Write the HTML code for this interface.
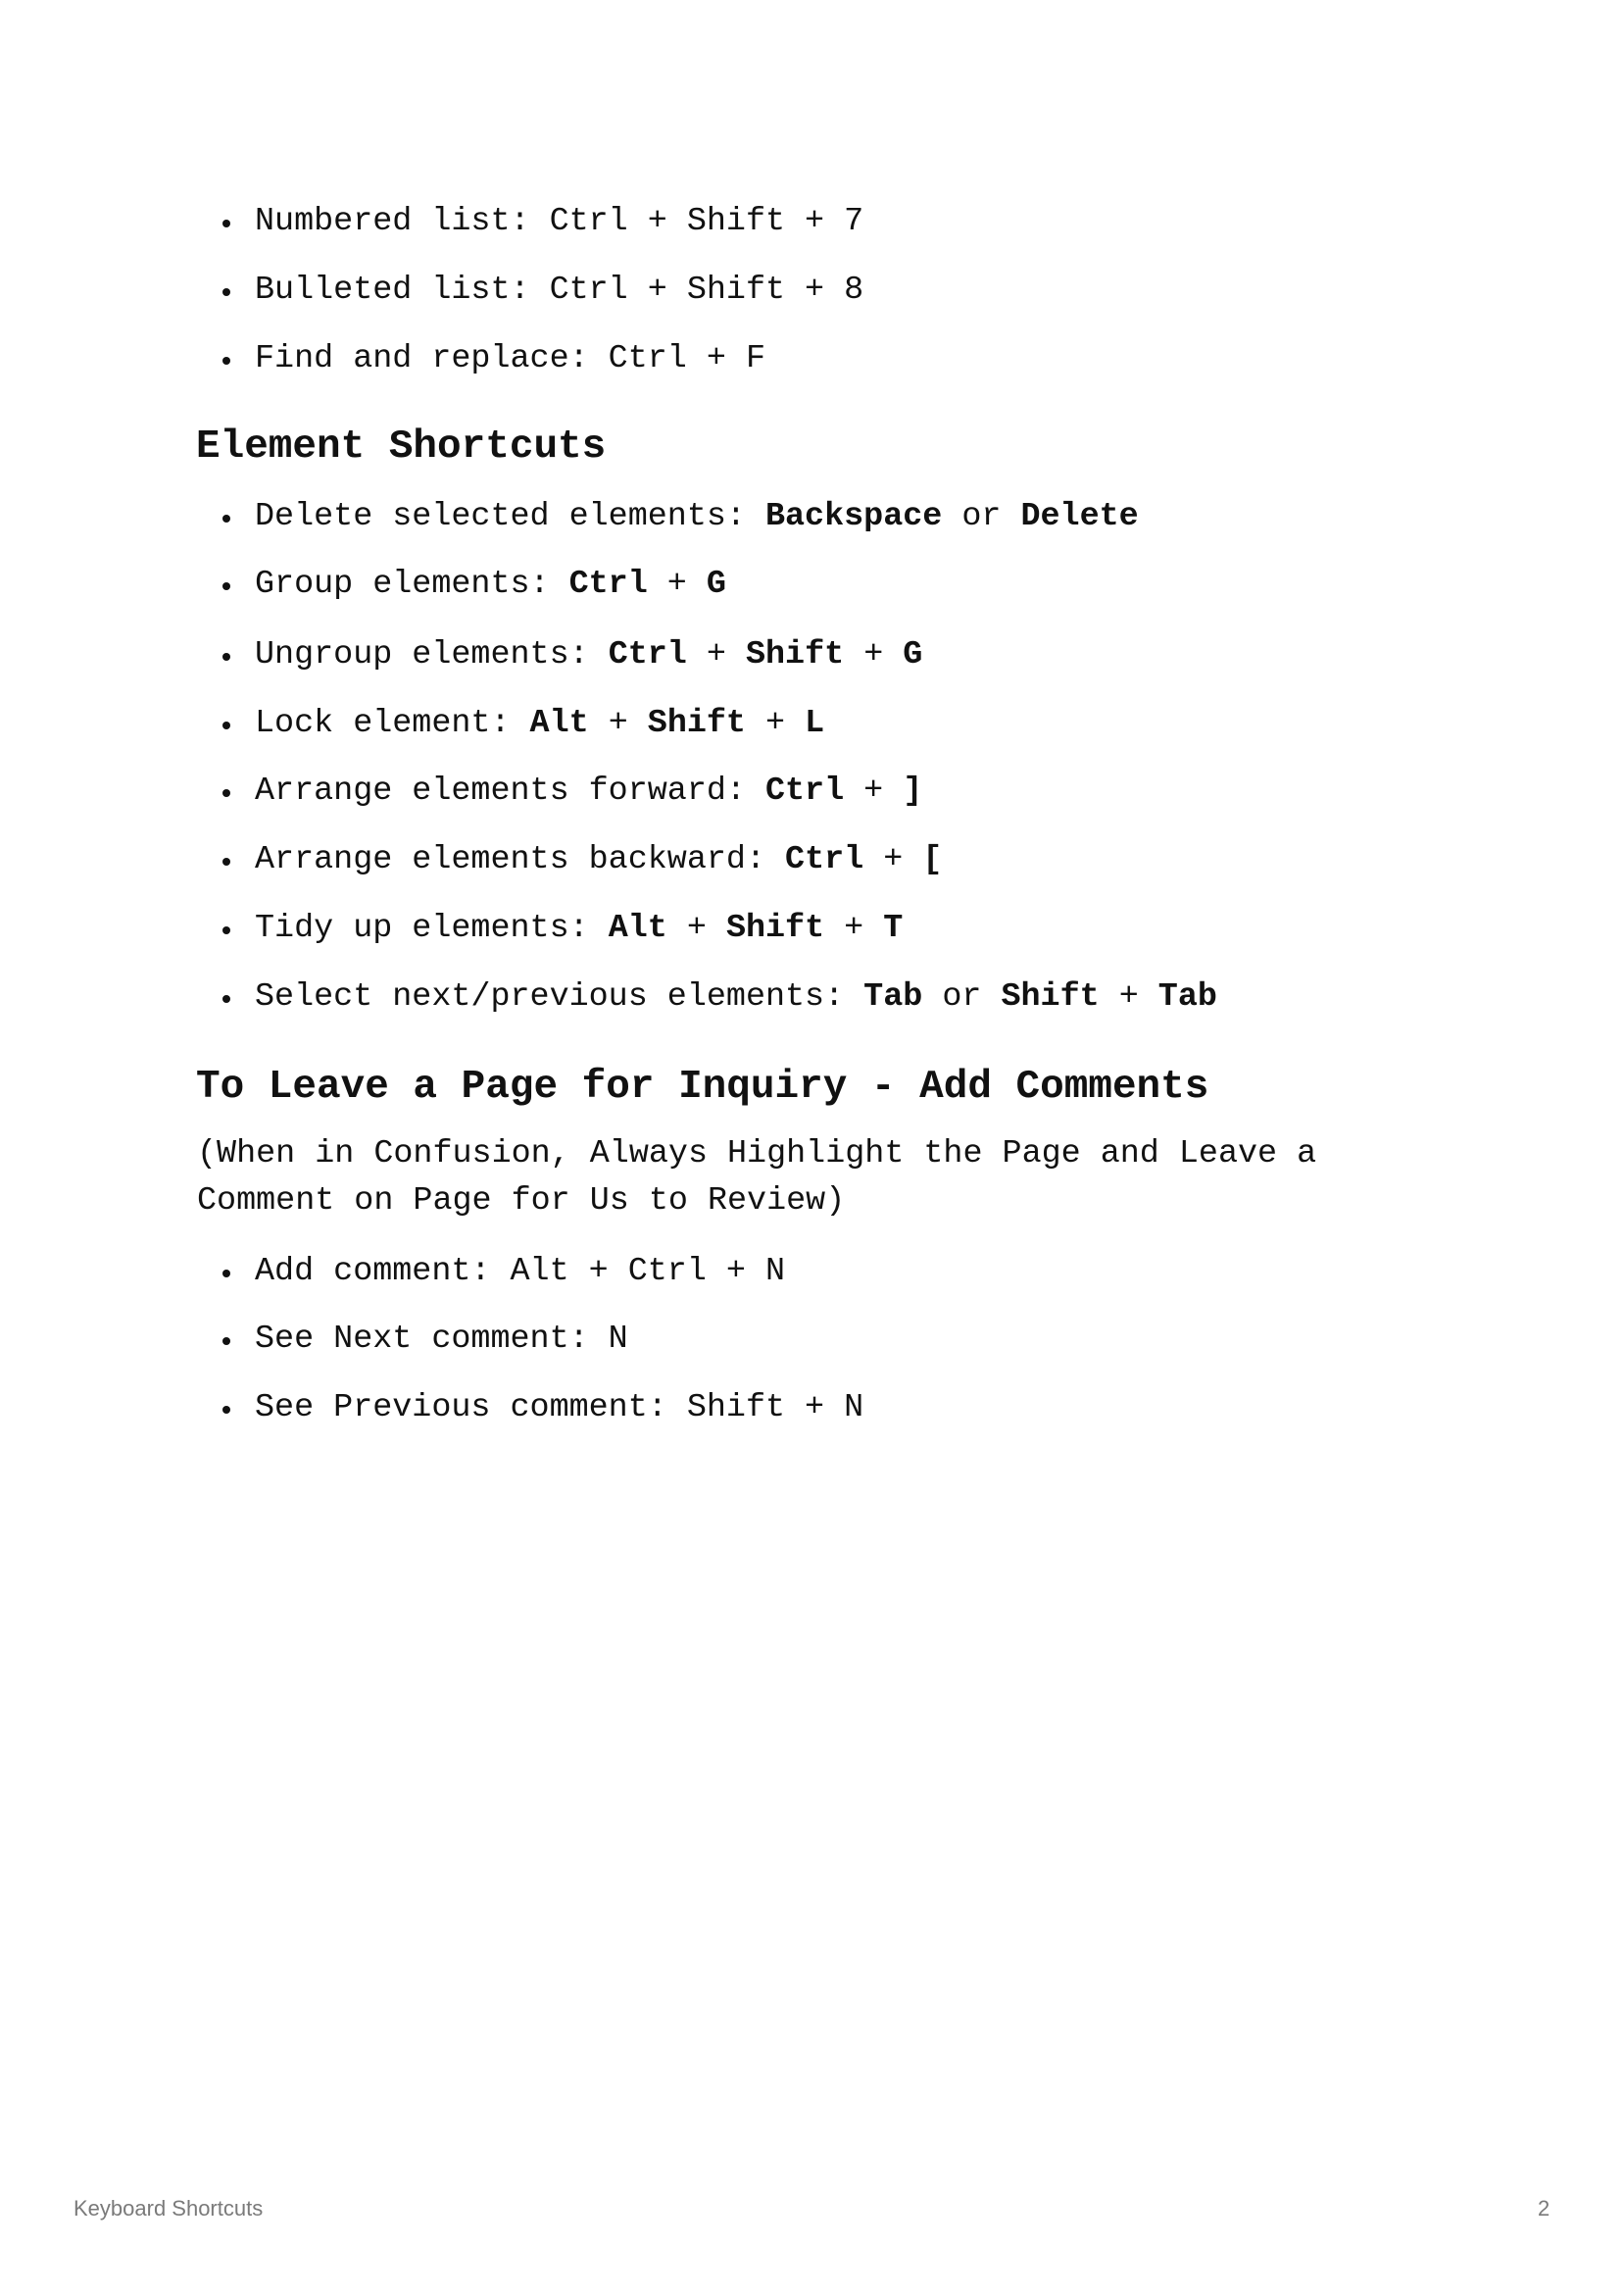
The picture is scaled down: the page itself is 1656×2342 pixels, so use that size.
<!DOCTYPE html>
<html><head><meta charset="utf-8"><style>
html,body{margin:0;padding:0;background:#fff;}
body{width:1656px;height:2342px;position:relative;overflow:hidden;font-family:"Liberation Mono",monospace;color:#111;}
.l{position:absolute;left:260px;height:50px;line-height:50px;font-size:33.4px;white-space:pre;}
.l::before{content:"";position:absolute;left:-33px;top:23px;width:8px;height:8px;border-radius:50%;background:#111;}
.h{position:absolute;left:200px;height:60px;line-height:60px;font-size:41px;font-weight:bold;white-space:pre;}
.p{position:absolute;left:201px;height:50px;line-height:50px;font-size:33.4px;white-space:pre;}
b{font-weight:bold;}
.f{position:absolute;top:2240px;line-height:26px;font-family:"Liberation Sans",sans-serif;font-size:22px;color:#7a7a7a;}
</style></head><body>
<div class="l" style="top:201px">Numbered list: Ctrl + Shift + 7</div>
<div class="l" style="top:271px">Bulleted list: Ctrl + Shift + 8</div>
<div class="l" style="top:341px">Find and replace: Ctrl + F</div>
<div class="h" style="top:426px">Element Shortcuts</div>
<div class="l" style="top:502px">Delete selected elements: <b>Backspace</b> or <b>Delete</b></div>
<div class="l" style="top:571px">Group elements: <b>Ctrl</b> + <b>G</b></div>
<div class="l" style="top:643px">Ungroup elements: <b>Ctrl</b> + <b>Shift</b> + <b>G</b></div>
<div class="l" style="top:713px">Lock element: <b>Alt</b> + <b>Shift</b> + <b>L</b></div>
<div class="l" style="top:782px">Arrange elements forward: <b>Ctrl</b> + <b>]</b></div>
<div class="l" style="top:852px">Arrange elements backward: <b>Ctrl</b> + <b>[</b></div>
<div class="l" style="top:922px">Tidy up elements: <b>Alt</b> + <b>Shift</b> + <b>T</b></div>
<div class="l" style="top:992px">Select next/previous elements: <b>Tab</b> or <b>Shift</b> + <b>Tab</b></div>
<div class="h" style="top:1079px">To Leave a Page for Inquiry - Add Comments</div>
<div class="p" style="top:1152px">(When in Confusion, Always Highlight the Page and Leave a</div>
<div class="p" style="top:1200px">Comment on Page for Us to Review)</div>
<div class="l" style="top:1272px">Add comment: Alt + Ctrl + N</div>
<div class="l" style="top:1341px">See Next comment: N</div>
<div class="l" style="top:1411px">See Previous comment: Shift + N</div>
<div class="f" style="left:75px">Keyboard Shortcuts</div>
<div class="f" style="left:1569px">2</div>
</body></html>
